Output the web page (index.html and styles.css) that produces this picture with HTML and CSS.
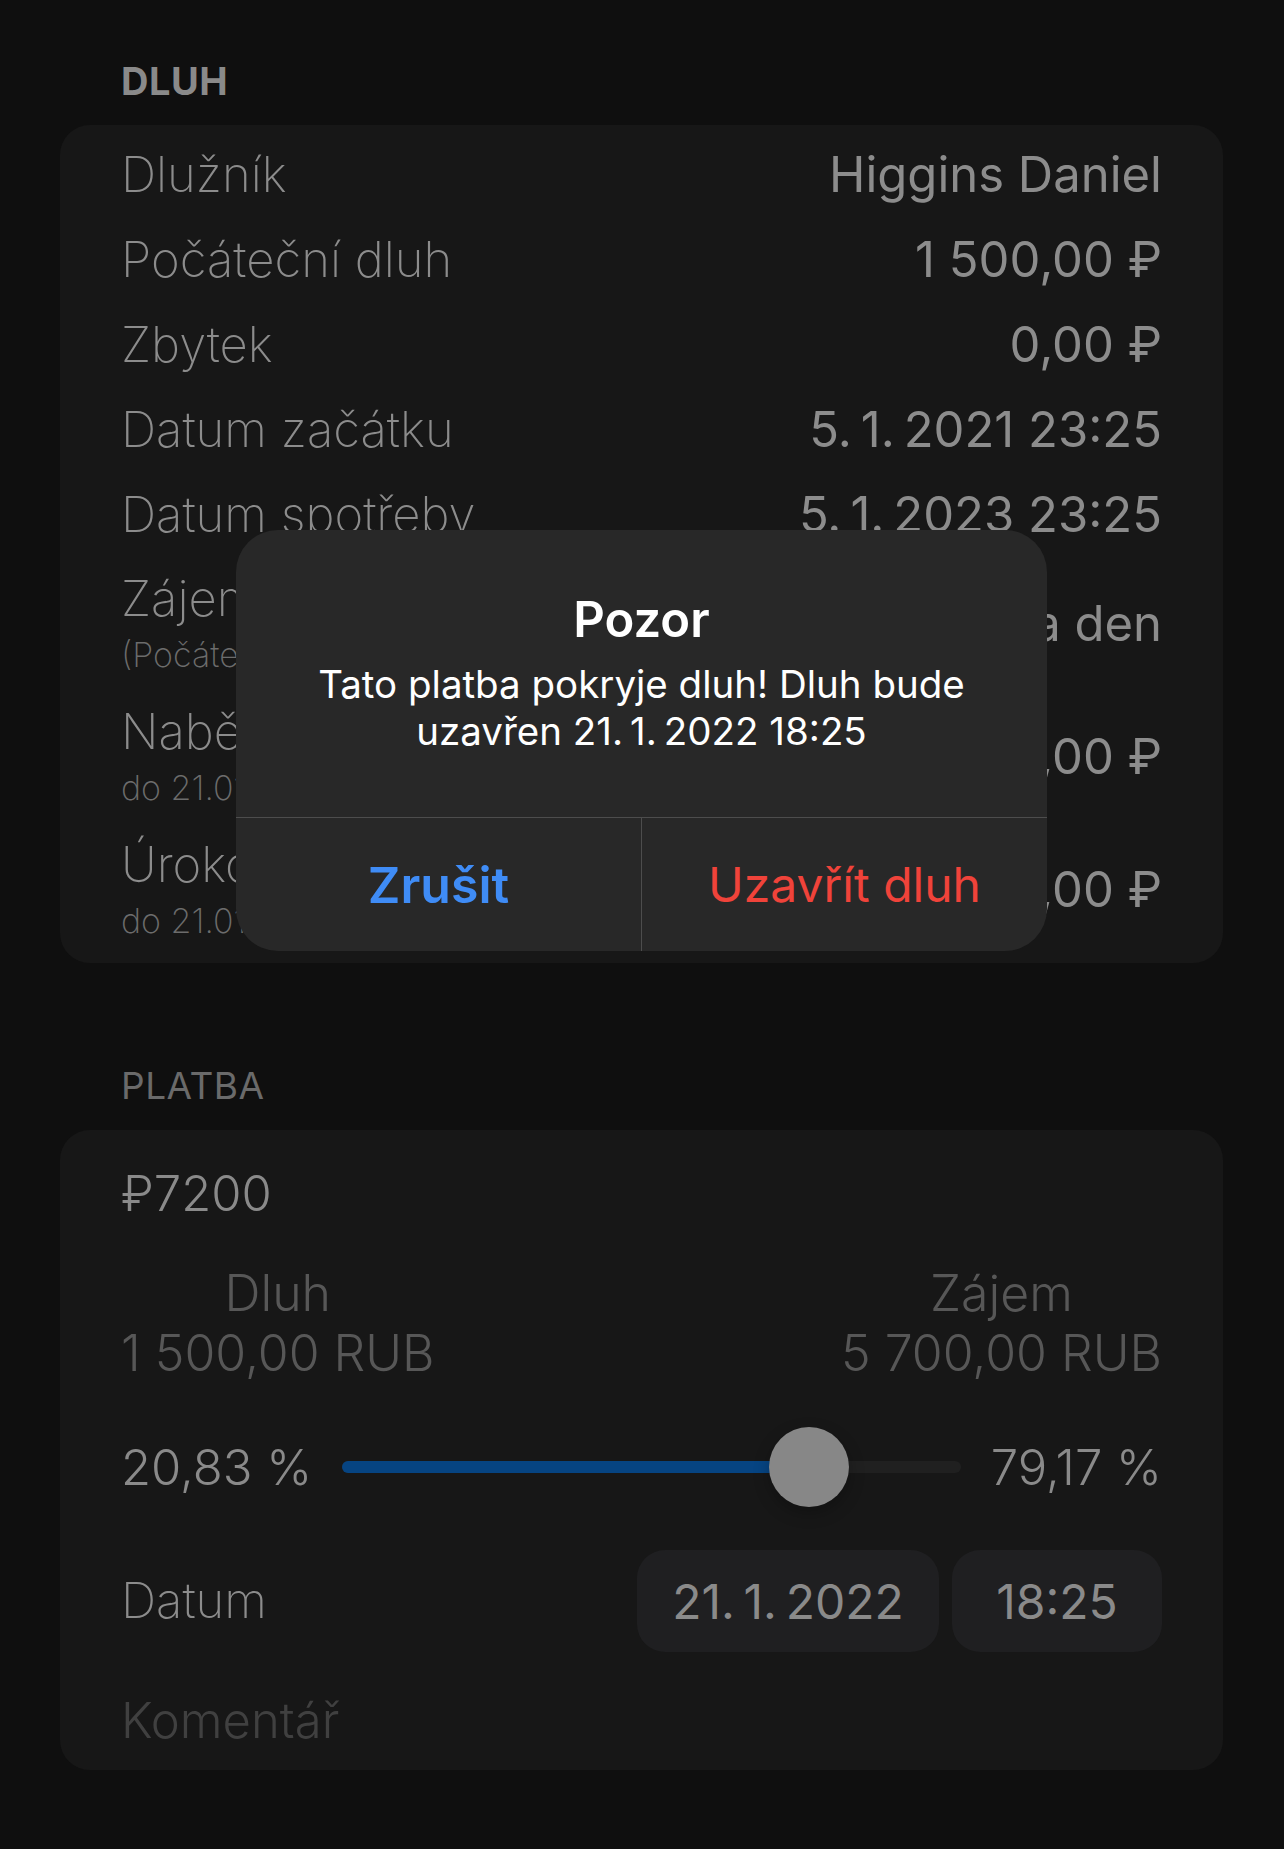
FILE: index.html
```html
<!DOCTYPE html>
<html lang="cs">
<head>
<meta charset="utf-8">
<title>Dluh</title>
<link rel="stylesheet" href="styles.css">
</head>
<body>
<main class="page">
  <h2 class="section-title section-title--bold">DLUH</h2>
  <section class="card card--debt">
    <div class="row"><span class="label">Dlužník</span><span class="value">Higgins Daniel</span></div>
    <div class="row"><span class="label">Počáteční dluh</span><span class="value">1 500,00 ₽</span></div>
    <div class="row"><span class="label">Zbytek</span><span class="value">0,00 ₽</span></div>
    <div class="row"><span class="label">Datum začátku</span><span class="value">5.&#8201;1.&#8201;2021 23:25</span></div>
    <div class="row"><span class="label">Datum spotřeby</span><span class="value">5.&#8201;1.&#8201;2023 23:25</span></div>
    <div class="row row--tall">
      <div class="label-stack"><span class="label">Zájem</span><span class="sublabel">(Počáteční dluh)</span></div>
      <span class="value">0,25 % za den</span>
    </div>
    <div class="row row--tall">
      <div class="label-stack"><span class="label">Naběhlé úroky</span><span class="sublabel">do 21.01.2022</span></div>
      <span class="value">5 700,00 ₽</span>
    </div>
    <div class="row row--tall">
      <div class="label-stack"><span class="label">Úroková částka</span><span class="sublabel">do 21.01.2022</span></div>
      <span class="value">7 200,00 ₽</span>
    </div>
  </section>

  <h2 class="section-title">PLATBA</h2>
  <section class="card card--pay">
    <div class="amount">₽7200</div>
    <div class="split">
      <div class="split-col"><span class="split-head">Dluh</span><span class="split-val">1 500,00 RUB</span></div>
      <div class="split-col"><span class="split-head">Zájem</span><span class="split-val">5 700,00 RUB</span></div>
    </div>
    <div class="slider-row">
      <span class="pct">20,83 %</span>
      <div class="track">
        <div class="track-fill" style="width: 75.4%"></div>
        <div class="thumb" style="left: 75.4%"></div>
      </div>
      <span class="pct">79,17 %</span>
    </div>
    <div class="date-row">
      <span class="label">Datum</span>
      <div class="pills"><span class="pill pill--date">21.&#8201;1.&#8201;2022</span><span class="pill pill--time">18:25</span></div>
    </div>
    <div class="comment">Komentář</div>
  </section>
</main>

<div class="alert" role="alertdialog">
  <div class="alert-body">
    <div class="alert-title">Pozor</div>
    <div class="alert-msg">Tato platba pokryje dluh! Dluh bude<br>uzavřen 21.&#8201;1.&#8201;2022 18:25</div>
  </div>
  <div class="alert-actions">
    <button class="alert-btn alert-btn--cancel">Zrušit</button>
    <button class="alert-btn alert-btn--destructive">Uzavřít dluh</button>
  </div>
</div>
</body>
</html>
```

FILE: styles.css
```css
* { box-sizing: border-box; }
html, body { margin: 0; padding: 0; }
body {
  background: #0f0f0f;
  font-family: Inter, "Noto Sans", "Liberation Sans", sans-serif;
  color: #8a8a8a;
  width: 1284px;
  min-height: 1849px;
  position: relative;
}
.page {
  padding: 58px 61px 0 60px;
}
.section-title {
  margin: 0 0 21px 61px;
  font-size: 37px;
  line-height: 46px;
  font-weight: 400;
  color: #6a6a6a;
  letter-spacing: 0.5px;
}
.section-title--bold {
  font-size: 38px;
  font-weight: 700;
  color: #8a8a8a;
}
.card {
  background: #171717;
  border-radius: 30px;
  padding: 0 61px;
}
.card--debt {
  padding-top: 7px;
  padding-bottom: 7px;
  margin-bottom: 100px;
}
.row {
  display: flex;
  justify-content: space-between;
  align-items: center;
  height: 85px;
}
.row--tall { height: 133px; }
.label {
  font-size: 49px;
  font-weight: 150;
  color: #8c8c8c;
  line-height: 62px;
  white-space: nowrap;
}
.value {
  font-size: 49px;
  font-weight: 400;
  color: #8c8c8c;
  white-space: nowrap;
}
.label-stack {
  display: flex;
  flex-direction: column;
}
.sublabel {
  font-size: 34px;
  font-weight: 150;
  color: #6c6c6c;
  line-height: 50px;
}

/* payment card */
.card--pay {
  padding-bottom: 19px;
}
.amount {
  height: 126px;
  display: flex;
  align-items: center;
  font-size: 49px;
  font-weight: 300;
  color: #8a8a8a;
}
.split {
  display: flex;
  justify-content: space-between;
  padding-top: 7px;
}
.split-col {
  display: flex;
  flex-direction: column;
  align-items: center;
}
.split-head, .split-val {
  font-size: 50px;
  font-weight: 300;
  line-height: 60px;
  color: #575757;
}
.slider-row {
  margin-top: 42px;
  height: 84px;
  display: flex;
  align-items: center;
  gap: 30px;
}
.pct {
  font-size: 49px;
  font-weight: 300;
  color: #8a8a8a;
  white-space: nowrap;
}
.track {
  flex: 1;
  height: 12px;
  border-radius: 6px;
  background: #202020;
  position: relative;
}
.track-fill {
  height: 100%;
  border-radius: 6px;
  background: #064482;
}
.thumb {
  position: absolute;
  top: 50%;
  width: 80px;
  height: 80px;
  margin: -40px 0 0 -40px;
  border-radius: 50%;
  background: #878787;
  box-shadow: 0 6px 16px rgba(0,0,0,0.25);
}
.date-row {
  margin-top: 41px;
  height: 102px;
  display: flex;
  align-items: center;
  justify-content: space-between;
}
.pills {
  display: flex;
  gap: 13px;
}
.pill {
  height: 102px;
  display: flex;
  align-items: center;
  justify-content: center;
  background: #1f1f21;
  border-radius: 28px;
  font-size: 48px;
  font-weight: 400;
  color: #8a8a8a;
}
.pill--date { width: 302px; }
.pill--time { width: 210px; }
.comment {
  margin-top: 39px;
  line-height: 60px;
  font-size: 49px;
  font-weight: 300;
  color: #404040;
}

/* alert */
.alert {
  position: absolute;
  top: 530px;
  left: 236px;
  width: 811px;
  height: 421px;
  background: #282828;
  border-radius: 42px;
  overflow: hidden;
  display: flex;
  flex-direction: column;
}
.alert-body {
  height: 288px;
  border-bottom: 1.5px solid #4d4d4d;
  display: flex;
  flex-direction: column;
  align-items: center;
  padding-top: 63px;
  text-align: center;
}
.alert-title {
  color: #ffffff;
  font-size: 49px;
  font-weight: 600;
  line-height: 54px;
}
.alert-msg {
  color: #ffffff;
  font-size: 38.5px;
  font-weight: 400;
  line-height: 47px;
  margin-top: 14px;
}
.alert-actions {
  flex: 1;
  display: flex;
}
.alert-btn {
  flex: 1;
  background: none;
  border: 0;
  font-family: inherit;
  padding: 0;
  margin: 0;
}
.alert-btn--cancel {
  color: #3f8cf6;
  font-size: 50px;
  font-weight: 600;
  border-right: 1.5px solid #4d4d4d;
}
.alert-btn--destructive {
  color: #f0433a;
  font-size: 48px;
  font-weight: 400;
}
```
